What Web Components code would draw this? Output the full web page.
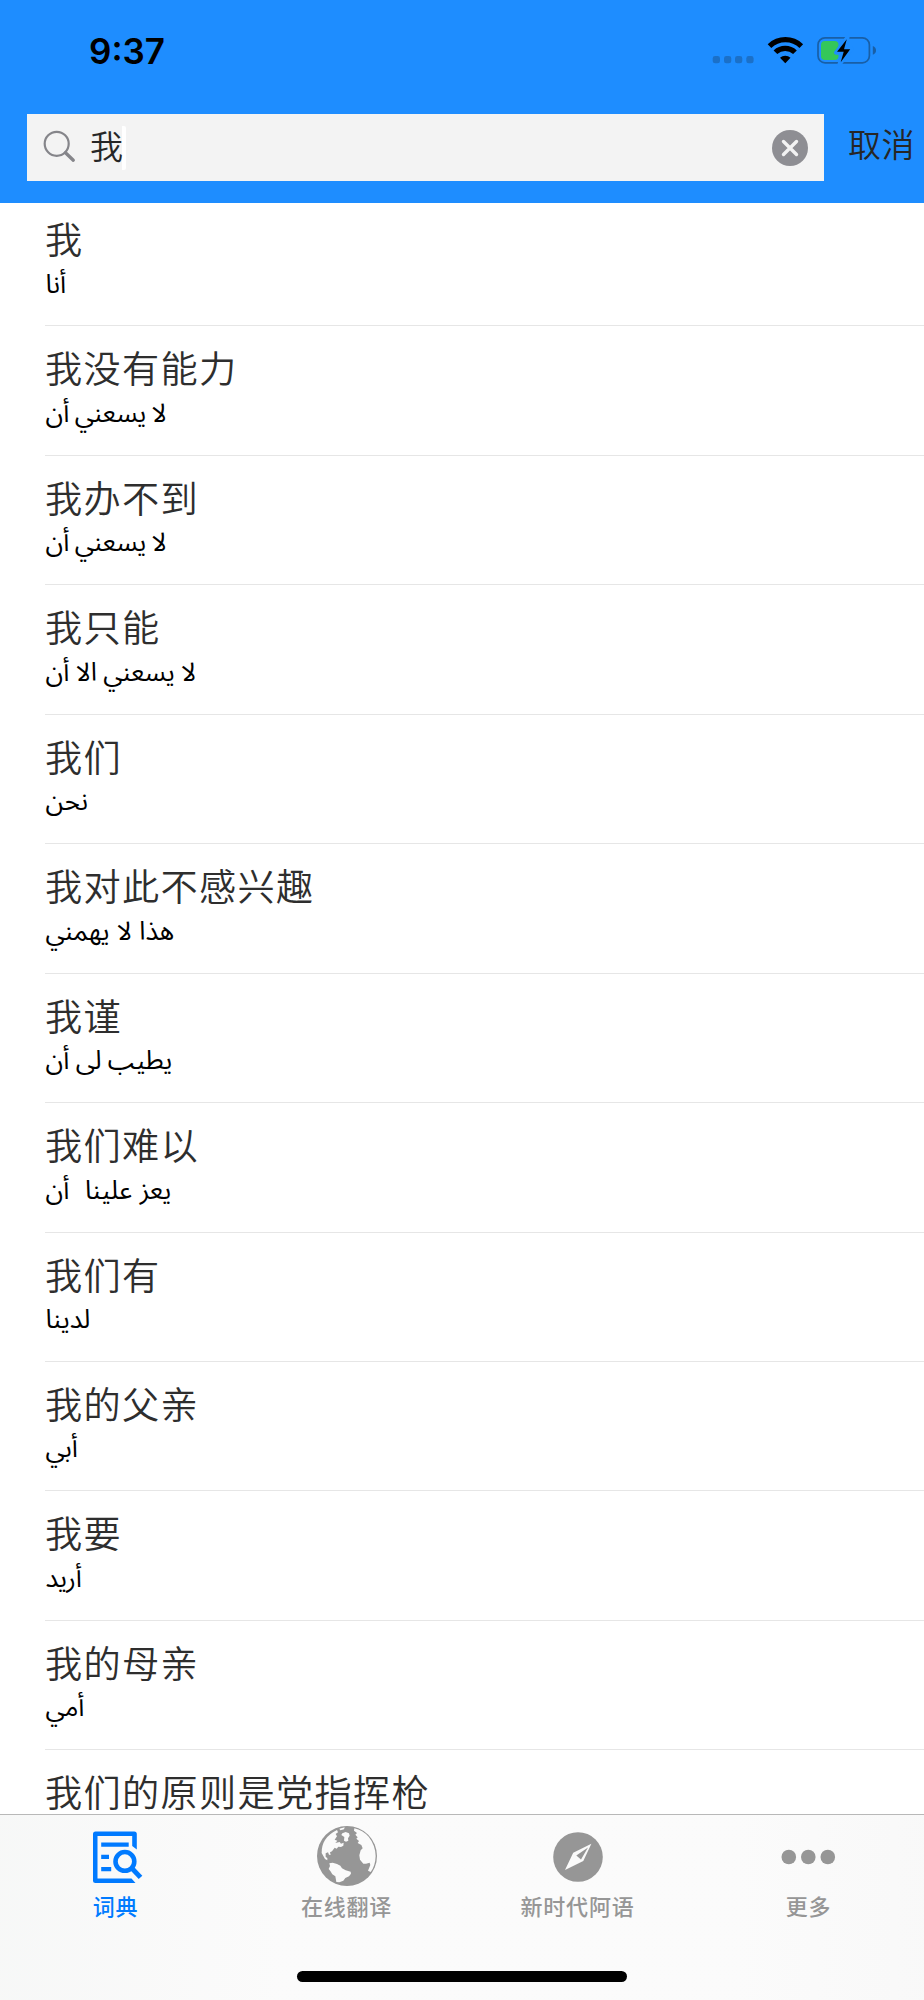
<!DOCTYPE html>
<html lang="zh-CN">
<head>
  <meta charset="UTF-8">
  <title>词典</title>
  <style>
    body {
      background-color: hsl(0, 0%, 100%);
      font-family: "Liberation Sans", "Noto Sans CJK SC", sans-serif;
      margin: 0;
    }
  </style>
</head>
<body>
  <dictionary-app></dictionary-app>

  <script>
    class StatusBar extends HTMLElement {

      constructor () {
        super()
        this.shadow = this.attachShadow({ mode: 'open' })
      }

      connectedCallback () {
        this.render()
      }

      render () {
        this.shadow.innerHTML =
        /*html*/`
        <style>
          :host {
            box-sizing: border-box;
            display: flex;
            height: 114px;
            justify-content: space-between;
            padding: 30px 48px 0 89px;
          }

          time {
            color: hsl(0, 0%, 0%);
            font-family: Inter, sans-serif;
            font-size: 35px;
            font-weight: 600;
            height: 42px;
            line-height: 42px;
          }

          svg {
            display: block;
            height: 42px;
            width: 166px;
          }
        </style>

        <time>9:37</time>
        <svg viewBox="710 30 166 42">
          <g fill="#1b70c8">
            <rect x="712.7" y="56" width="7.3" height="7.3" rx="2.4" />
            <rect x="724" y="56" width="7.3" height="7.3" rx="2.4" />
            <rect x="735" y="56" width="7.3" height="7.3" rx="2.4" />
            <rect x="746.3" y="56" width="7.3" height="7.3" rx="2.4" />
          </g>
          <path d="M767.7 44.2a25.2 25.2 0 0 1 35.4 0l-3.6 3.7a20.2 20.2 0 0 0-28.2 0z" />
          <path d="M773.6 50.4a16.8 16.8 0 0 1 23.2 0l-3.7 3.7a11.8 11.8 0 0 0-15.8 0z" />
          <path d="M780 57.8a7.8 7.8 0 0 1 10.5 0l-5.2 5.4z" />
          <rect x="818" y="37.8" width="51.4" height="25" rx="7" fill="none" stroke="#195fa6" stroke-width="1.7" />
          <path d="M872.8 46q3.2 1.4 3.2 4.4t-3.2 4.4z" fill="#195fa6" />
          <rect x="821" y="41" width="17.5" height="19" rx="4" fill="#34c759" />
          <path d="M847.6 37.2 836 52.7h7.5L839.4 64.5 851.6 48.5H844.5z" fill="#1e8dff" stroke="#1e8dff" stroke-width="4" stroke-linejoin="round" />
          <path d="M846.8 39.3 837 51.8h6.7L840.7 62.3 850.2 49.3H844z" />
        </svg>
        `
      }
    }

    customElements.define('status-bar-component', StatusBar)

    class SearchBar extends HTMLElement {

      constructor () {
        super()
        this.shadow = this.attachShadow({ mode: 'open' })
      }

      connectedCallback () {
        this.render()
      }

      render () {
        this.shadow.innerHTML =
        /*html*/`
        <style>
          :host {
            align-items: center;
            display: flex;
            padding: 0 0 22px 27px;
          }

          .field {
            align-items: center;
            background-color: hsl(0, 0%, 95.3%);
            box-sizing: border-box;
            display: flex;
            flex: none;
            height: 67px;
            padding: 0 16px;
            width: 796.5px;
          }

          .search {
            height: 34px;
            margin: 0 13px 1px 0;
            width: 34px;
          }

          .value {
            border-right: 4px solid hsl(0, 0%, 100%);
            border-radius: 2px;
            color: hsl(0, 0%, 15%);
            flex: none;
            font-size: 33px;
            font-weight: 350;
            height: 44px;
            line-height: 44px;
            width: 32px;
          }

          .clear {
            height: 36px;
            margin: 0 0 0 auto;
            width: 36px;
          }

          .cancel {
            color: hsl(0, 0%, 15%);
            flex: none;
            font-size: 33px;
            font-weight: 350;
            letter-spacing: 0.6px;
            line-height: 44px;
            margin: 0 0 4px 24.5px;
            white-space: nowrap;
          }
        </style>

        <div class="field">
          <svg class="search" viewBox="0 0 34 34" fill="none" stroke="#85858a" stroke-linecap="round">
            <circle cx="13.7" cy="13.8" r="12" stroke-width="2.2" />
            <path d="M22.5 22.7 30.3 30.2" stroke-width="3.3" />
          </svg>
          <span class="value"><slot></slot></span>
          <svg class="clear" viewBox="0 0 36 36">
            <circle cx="18" cy="18" r="18" fill="#8e8e93" />
            <path d="M11.5 11.5 24.5 24.5M24.5 11.5 11.5 24.5" stroke="#f2f2f2" stroke-width="3.4" stroke-linecap="round" />
          </svg>
        </div>
        <span class="cancel"><slot name="cancel"></slot></span>
        `
      }
    }

    customElements.define('search-bar-component', SearchBar)

    class WordEntry extends HTMLElement {

      constructor () {
        super()
        this.shadow = this.attachShadow({ mode: 'open' })
      }

      connectedCallback () {
        this.render()
      }

      render () {
        this.shadow.innerHTML =
        /*html*/`
        <style>
          :host {
            border-bottom: 1px solid hsl(0, 0%, 90%);
            box-sizing: border-box;
            display: block;
            flex: none;
            height: 129.45px;
            margin-left: 45px;
            padding-top: 24px;
          }

          .word {
            color: hsl(0, 0%, 18%);
            font-size: 37.2px;
            font-weight: 350;
            letter-spacing: 1.3px;
            line-height: 40px;
            white-space: nowrap;
          }

          .translation {
            color: hsl(0, 0%, 0%);
            direction: rtl;
            font-family: "Noto Sans Arabic", "DejaVu Sans", sans-serif;
            font-size: 26px;
            line-height: 40px;
            margin-top: 3.5px;
            padding-left: 0.5px;
            text-align: left;
            white-space: pre;
            word-spacing: var(--word-gap, 0);
          }
        </style>

        <div class="word"><slot></slot></div>
        <div class="translation" lang="ar"><slot name="translation"></slot></div>
        `
      }
    }

    customElements.define('word-entry-component', WordEntry)

    class TabItem extends HTMLElement {

      constructor () {
        super()
        this.shadow = this.attachShadow({ mode: 'open' })
      }

      connectedCallback () {
        this.render()
      }

      getIcon () {
        const icons = {
          dictionary:
          /*html*/`
          <svg viewBox="0 2.6 60 60">
            <path d="M50.8 26V10.5q0-2.5-2.5-2.5H9.5Q7 8 7 10.5V57q0 2.5 2.5 2.5H49.5L45.5 55H11.5V12.5H46.2V22.5z" fill="#007aff" />
            <path d="M15.2 21.3H42.7M15.2 33.5H23M15.2 45.7H25.2" stroke="#007aff" stroke-width="4.3" />
            <circle cx="38.9" cy="38" r="9.4" fill="none" stroke="#007aff" stroke-width="4.6" />
            <path d="M45.5 44.5 54.5 54" stroke="#007aff" stroke-width="5" />
          </svg>`,
          globe:
          /*html*/`
          <svg viewBox="51 31 180 180">
            <circle cx="141" cy="121" r="90" fill="#969696" />
            <g fill="#fafafa">
              <path d="M65 112Q64 66 111 43L114 50 107 55 111 62 104 72 112 75 106 82 119 79 123 84 131 81 130 90 123 94 115 93 110 99 104 96 96 107 90 110 92 118 87 117 84 110 77 113 77 124 82 127 82 134 75 130Z" />
              <path d="M118 39 134 35 132 41 121 44Z" />
              <path d="M127 53 137 49 147 53 149 60 144 68 145 75 138 78 132 75 133 64 124 58Z" />
              <path d="M88 143 98 141 111 145 121 150 126 158 137 164 152 168 153 174 147 182 136 187 130 195 118 200 109 199 106 182 97 176 91 166 86 160 90 151Z" />
              <path d="M163 38Q188 44 206 63 226 88 227 121 226 151 212 169L204 165 211 148 209 141 198 144 190 144 180 132 178 119 182 104 188 98 184 88 173 82 177 76 169 69 173 65 166 57 171 52 162 45Z" />
            </g>
          </svg>`,
          compass:
          /*html*/`
          <svg viewBox="0 2.5 60 60">
            <circle cx="30" cy="33.5" r="24.8" fill="#969696" />
            <path fill-rule="evenodd" d="M43.4 20.2 35.3 37.5 17 46.6 25.2 29.3ZM40 24 28.3 32 33 36Z" fill="#fafafa" />
          </svg>`,
          more:
          /*html*/`
          <svg viewBox="0.7 2.5 60 60" fill="#969696">
            <circle cx="10.5" cy="33.5" r="7.3" />
            <circle cx="30" cy="33.5" r="7.3" />
            <circle cx="49.5" cy="33.5" r="7.3" />
          </svg>`
        }

        return icons[this.getAttribute('icon')]
      }

      render () {
        this.shadow.innerHTML =
        /*html*/`
        <style>
          :host {
            align-items: center;
            color: hsl(0, 0%, 59%);
            display: flex;
            flex-direction: column;
          }

          :host([active]) {
            color: hsl(211, 100%, 50%);
          }

          svg {
            display: block;
            height: 60px;
            width: 60px;
          }

          span {
            font-size: 22px;
            font-weight: 500;
            letter-spacing: 0.8px;
            line-height: 30px;
            margin-top: 7px;
          }
        </style>

        ${this.getIcon()}
        <span><slot></slot></span>
        `
      }
    }

    customElements.define('tab-item-component', TabItem)

    class TabBar extends HTMLElement {

      constructor () {
        super()
        this.shadow = this.attachShadow({ mode: 'open' })
      }

      connectedCallback () {
        this.render()
      }

      render () {
        this.shadow.innerHTML =
        /*html*/`
        <style>
          :host {
            align-items: center;
            background: linear-gradient(90deg, hsl(150, 5%, 97%), hsl(0, 0%, 98.4%) 30%, hsl(0, 0%, 98.4%) 80%, hsl(0, 0%, 97.5%));
            border-top: 1px solid hsl(0, 0%, 72%);
            box-sizing: border-box;
            display: flex;
            flex: none;
            flex-direction: column;
            height: 186px;
            justify-content: space-between;
            padding: 11px 0 18px;
          }

          nav {
            display: grid;
            grid-template-columns: repeat(4, 1fr);
            width: 100%;
          }

          .home-indicator {
            background-color: hsl(0, 0%, 0%);
            border-radius: 6px;
            height: 11px;
            width: 330px;
          }
        </style>

        <nav><slot></slot></nav>
        <div class="home-indicator"></div>
        `
      }
    }

    customElements.define('tab-bar-component', TabBar)

    class DictionaryApp extends HTMLElement {

      constructor () {
        super()
        this.shadow = this.attachShadow({ mode: 'open' })

        this.data = [
          { word: '我', translation: 'أنا' },
          { word: '我没有能力', translation: 'لا يسعني أن', gap: '-1.4px' },
          { word: '我办不到', translation: 'لا يسعني أن', gap: '-1.4px' },
          { word: '我只能', translation: 'لا يسعني الا أن', gap: '-0.5px' },
          { word: '我们', translation: 'نحن' },
          { word: '我对此不感兴趣', translation: 'هذا لا يهمني', gap: '0.5px' },
          { word: '我谨', translation: 'يطيب لى أن', gap: '-0.5px' },
          { word: '我们难以', translation: 'يعز علينا  أن', gap: '1px' },
          { word: '我们有', translation: 'لدينا' },
          { word: '我的父亲', translation: 'أبي' },
          { word: '我要', translation: 'أريد' },
          { word: '我的母亲', translation: 'أمي' },
          { word: '我们的原则是党指挥枪', translation: '' }
        ]
      }

      connectedCallback () {
        this.render()
      }

      render () {
        this.shadow.innerHTML =
        /*html*/`
        <style>
          :host {
            display: flex;
            flex-direction: column;
            height: 2000px;
            overflow: hidden;
            width: 924px;
          }

          header {
            background-color: #1e8dff;
            flex: none;
            height: 203px;
          }

          main {
            display: flex;
            flex: 1;
            flex-direction: column;
            min-height: 0;
            overflow: hidden;
          }

          word-entry-component:first-child {
            margin-top: -6px;
          }
        </style>

        <header>
          <status-bar-component></status-bar-component>
          <search-bar-component>我<span slot="cancel">取消</span></search-bar-component>
        </header>
        <main>
          ${this.data.map(entry => `<word-entry-component style="--word-gap: ${entry.gap || '0px'}">${entry.word}<span slot="translation">${entry.translation}</span></word-entry-component>`).join('')}
        </main>
        <tab-bar-component>
          <tab-item-component icon="dictionary" active>词典</tab-item-component>
          <tab-item-component icon="globe">在线翻译</tab-item-component>
          <tab-item-component icon="compass">新时代阿语</tab-item-component>
          <tab-item-component icon="more">更多</tab-item-component>
        </tab-bar-component>
        `
      }
    }

    customElements.define('dictionary-app', DictionaryApp)
  </script>
</body>
</html>
